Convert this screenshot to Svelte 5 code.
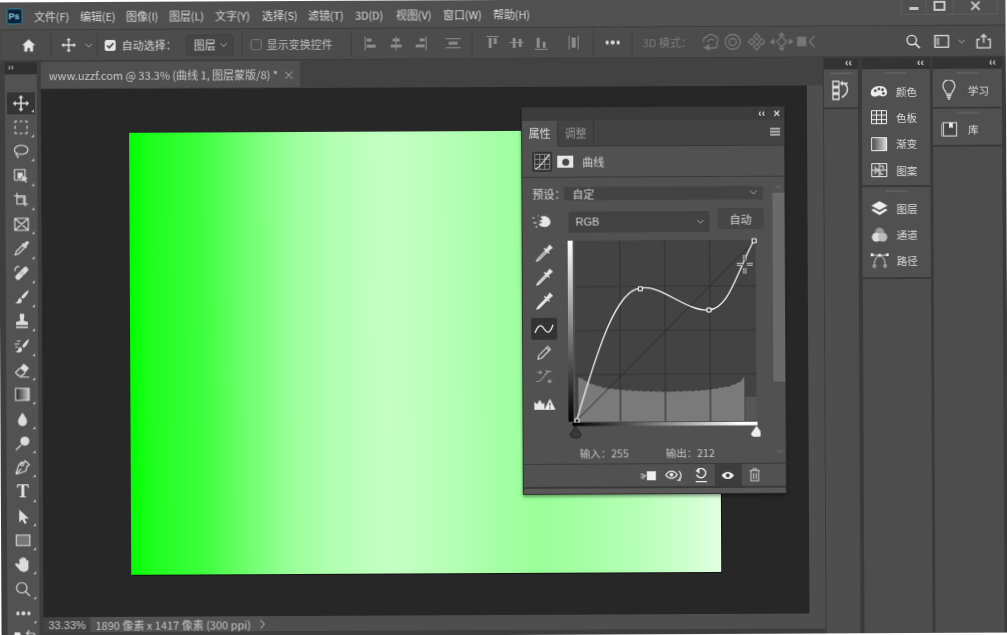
<script>
  const menus = [['文件(F)',46],['编辑(E)',46],['图像(I)',43],['图层(L)',46],['文字(Y)',47],['选择(S)',46],['滤镜(T)',47],['3D(D)',41],['视图(V)',47],['窗口(W)',50],['帮助(H)',40]];
  const tools = [
    { k: 'move', f: 'M12 1l-3.500 4h2.500v6H5V8.500L1 12l4 3.500V13h6v6H8.500l3.500 4 3.500-4H13v-6h6v2.500l4-3.500-4-3.500V11h-6V5h2.500z' },
    { s: 'M4 6V4h3M10 4h4M17 4h3v2M20 10v4M20 18v2h-3M14 20h-4M7 20H4v-2M4 14v-4' },
    { s: 'M12 4c5 0 9 2.500 9 6s-4 6-9 6-9-2.500-9-6 4-6 9-6zM6 15c-2 2 0 3 1 3s1 2 0 3' },
    { s: 'M3 3h14v14H3z', f: 'M7 7h7v5l-2 0v3H7zM13 11l8 4-3.500 1 2 3.500-1.500 1-2-3.500-3 2z' },
    { s: 'M2 6h15v14M6 2v15h15M6 8h9v9' },
    { s: 'M3 4h18v16H3zM3 4l18 16M21 4L3 20' },
    { s: 'M13 8l-8 8-2 5 5-2 8-8z', f: 'M12 6l6 6 1-2-1-1 3-3a2 2 0 0 0-3-3l-3 3-1-1z' },
    { f: 'M4 15L15 4a3 3 0 0 1 4 0l1 1a3 3 0 0 1 0 4L9 20a3 3 0 0 1-4 0l-1-1a3 3 0 0 1 0-4z', s: 'M3 9a5 5 0 0 1 6-6', dots: 1 },
    { f: 'M21 2c-3 2-8 6-10 10l2 2c4-2 8-8 8-12zM10 13c-3 0-3 3-4 5l-3 1c3 2 9 2 9-3z' },
    { f: 'M9 2h6v5l-1 4 6 2v4H4v-4l6-2-1-4zM4 19h16v2H4z' },
    { f: 'M21 2c-3 2-7 6-9 10l2 2c4-2 7-8 7-12zM10 13c-3 0-3 3-4 5l-3 1c3 2 9 2 9-3z', s: 'M2 9h6M3 13h3M5 5h5' },
    { f: 'M14 3l7 6-5 6-7-6z', s: 'M9 9l-6 6 4 4h5l4-4M8 21h13' },
    { t: 'G' },
    { f: 'M12 3c3 5 6 8 6 12a6 6 0 0 1-12 0c0-4 3-7 6-12z' },
    { f: 'M15 3a6 6 0 1 0 .01 0z', s: 'M10 14l-7 7' },
    { s: 'M15 3l6 6-3 1-2 7-9 3-4 1 1-4 3-9 7-2zM3 21l7-7M11 10a2.500 2.500 0 1 1 .01 0' },
    { t: 'T' },
    { f: 'M7 3v17l4-4 3 6 3-1-3-6h6z' },
    { t: 'R' },
    { f: 'M7 12V6a1.500 1.500 0 0 1 3 0v5V4a1.500 1.500 0 0 1 3 0v7V5a1.500 1.500 0 0 1 3 0v7V8a1.500 1.500 0 0 1 3 0v9c0 3-3 5-6 5s-5-1-7-4l-5-6 1.500-1.500z' },
    { s: 'M10 10m-7 0a7 7 0 1 0 14 0 7 7 0 1 0-14 0M15 15l6 6' },
  ];
  const dock2 = [['颜色','palette'],['色板','grid'],['渐变','grad'],['图案','pattern']];
  const dock2b = [['图层','layers'],['通道','channels'],['路径','paths']];
  const droppers = ['#222', '#888', '#f2f2f2'];

  // jagged histogram outline, in graph coordinates
  const tops = [[18,141],[25,145],[40,150],[56,152],[80,153.5],[100,154],[130,153.5],[146,152],[165,149],[175,145],[181,139]];
  function topAt(x) {
    for (let i = 1; i < tops.length; i++) {
      if (x <= tops[i][0]) {
        const [x0, y0] = tops[i - 1];
        const [x1, y1] = tops[i];
        return y0 + (y1 - y0) * (x - x0) / (x1 - x0);
      }
    }
    return 139;
  }
  let hist = 'M14 184V140';
  for (let x = 18; x <= 181; x += 2) hist += `L${x} ${(topAt(x) + ((x * 7) % 3) * 0.5).toFixed(1)}`;
  hist += 'V184z';
</script>

<div class="app">
  <header class="menubar">
    <div class="logo">Ps</div>
    <nav class="menus">
      {#each menus as [m, w]}<span style="width:{w}px">{m}</span>{/each}
    </nav>
    <div class="winbtns">
      <span class="wb"><i class="minus"></i></span>
      <span class="wb two"><i class="square"></i></span>
      <span class="wb close">
        <svg viewBox="0 0 12 12" width="10" height="10"><path d="M1 1l10 10M11 1L1 11" stroke="#ccc" stroke-width="2.200"/></svg>
      </span>
    </div>
  </header>

  <div class="options">
    <div class="opt home">
      <svg viewBox="0 0 16 16" width="16" height="14"><path d="M8 1L0.500 8H3v7h3.500v-4h3v4H13V8h2.500z" fill="#e6e6e6"/></svg>
    </div>
    <div class="opt move">
      <svg viewBox="0 0 24 24" width="16" height="16"><path d="M12 3v18M3 12h18" stroke="#ddd" stroke-width="2"/><path d="M12 1l-3.500 4h7zM12 23l-3.500-4h7zM1 12l4-3.500v7zM23 12l-4-3.500v7z" fill="#ddd"/></svg>
      <svg viewBox="0 0 10 6" width="8" height="5"><path d="M1 1l4 4 4-4" fill="none" stroke="#aaa" stroke-width="1.200"/></svg>
    </div>
    <div class="opt auto">
      <span class="cb on"><svg viewBox="0 0 10 10" width="9" height="9"><path d="M1.500 5l2.500 2.500 4.500-5" fill="none" stroke="#444" stroke-width="1.800"/></svg></span>
      <span class="lbl">自动选择：</span>
      <span class="select">图层<svg viewBox="0 0 10 6" width="8" height="5"><path d="M1 1l4 4 4-4" fill="none" stroke="#aaa" stroke-width="1.200"/></svg></span>
    </div>
    <div class="opt transform">
      <span class="cb"></span>
      <span class="lbl dim">显示变换控件</span>
    </div>
    <div class="opt aligns">
      <svg viewBox="0 0 110 16" width="110" height="16" fill="#8c8c8c">
        <path d="M1 1h1v14H1zM3 3h5v3H3zM3 9h9v3H3z"/>
        <path d="M32 1h1v14h-1zM29 3h7v3h-7zM27 9h11v3H27z"/>
        <path d="M62 1h1v14h-1zM56 3h5v3h-5zM52 9h9v3h-9z"/>
        <path d="M82 3h15v1H82zM82 12h15v1H82zM85 6.500h9v3h-9z"/>
      </svg>
    </div>
    <div class="opt aligns2">
      <svg viewBox="0 0 100 16" width="100" height="16" fill="#8c8c8c">
        <path d="M1 1h12v1H1zM3 3h3v10H3zM8 3h3v6H8z"/>
        <path d="M24 7h14v1H24zM27 3h3v10h-3zM33 4h3v8h-3z"/>
        <path d="M49 14h13v1H49zM51 3h3v10h-3zM57 7h3v6h-3z"/>
        <path d="M83 1h1v14h-1zM92 1h1v14h-1zM86 3h4v10h-4z"/>
      </svg>
    </div>
    <div class="opt more"><i></i><i></i><i></i></div>
    <div class="opt mode">
      <span class="lbl dim3">3D 模式：</span>
      <svg viewBox="0 0 118 18" width="118" height="18" fill="none" stroke="#777" stroke-width="1.300">
        <path d="M3 9a3.500 3.500 0 0 1 3-5 5 5 0 0 1 8-1 4 4 0 0 1 2 7 3 3 0 0 1-2 5H8"/><path d="M8 12l-4 2.500L8 17z" fill="#777"/><path d="M7 9a4 4 0 0 1 6-2"/>
        <circle cx="32" cy="9" r="7.500"/><circle cx="32" cy="9" r="3.500"/>
        <path d="M56 1l3 3-3 3-3-3zM56 11l3 3-3 3-3-3zM51 6l3 3-3 3-3-3zM61 6l3 3-3 3-3-3z"/>
        <path d="M81 4l5 5-5 5-5-5zM71 9h3M88 9h3" /><path d="M81 0l-2 2.500h4zM81 18l-2-2.500h4zM70 9l3-2v4zM92 9l-3-2v4z" fill="#777"/>
        <path d="M97 5h8v8h-8z" fill="#777"/><path d="M114 3l-5 6 5 6"/>
      </svg>
    </div>
    <div class="right-icons">
      <svg viewBox="0 0 16 16" width="15" height="15"><circle cx="6.500" cy="6.500" r="5" fill="none" stroke="#ddd" stroke-width="1.500"/><path d="M10 10l5 5" stroke="#ddd" stroke-width="1.800"/></svg>
      <svg class="wsp" viewBox="0 0 16 14" width="16" height="13"><rect x=".7" y=".7" width="14.600" height="12.600" fill="none" stroke="#ddd" stroke-width="1.400"/><rect x="2" y="3" width="3.500" height="8" fill="#999"/></svg>
      <svg class="wchev" viewBox="0 0 10 6" width="8" height="5"><path d="M1 1l4 4 4-4" fill="none" stroke="#aaa" stroke-width="1.200"/></svg>
      <svg viewBox="0 0 16 16" width="16" height="15"><path d="M4 6H1v9h14V6h-3" fill="none" stroke="#ddd" stroke-width="1.400"/><path d="M8 10V1M5 4l3-3 3 3" fill="none" stroke="#ddd" stroke-width="1.400"/></svg>
    </div>
  </div>

  <div class="main">
    <aside class="toolbar">
      <div class="collapse">››</div>
      <div class="tools">
        {#each tools as tool, i}
          <div class="tool" class:active={i === 0}>
            {#if tool.t === 'G'}
              <svg viewBox="0 0 24 24" width="18" height="18"><defs><linearGradient id="tg"><stop offset="0" stop-color="#222"/><stop offset="1" stop-color="#ccc"/></linearGradient></defs><rect x="3" y="4" width="18" height="16" fill="url(#tg)" stroke="#ddd" stroke-width="1.500"/></svg>
            {:else if tool.t === 'T'}
              <span class="t-tool">T</span>
            {:else if tool.t === 'R'}
              <svg viewBox="0 0 24 24" width="18" height="18"><rect x="3" y="5" width="18" height="14" fill="#777" stroke="#ddd" stroke-width="1.500"/></svg>
            {:else}
              <svg viewBox="0 0 24 24" width="18" height="18">
                {#if tool.f}<path d={tool.f} fill="#dcdcdc"/>{/if}
                {#if tool.s}<path d={tool.s} fill="none" stroke="#dcdcdc" stroke-width="1.500" stroke-linejoin="round"/>{/if}
                {#if tool.dots}<path d="M10 10h1v1h-1zM13 10h1v1h-1zM10 13h1v1h-1zM13 13h1v1h-1zM11.500 11.500h1v1h-1z" fill="#444"/>{/if}
              </svg>
            {/if}
            {#if tool.k !== 'none'}<b class="corner"></b>{/if}
          </div>
        {/each}
        <div class="tool dots"><i></i><i></i><i></i><b class="corner"></b></div>
        <div class="swatches">
          <svg viewBox="0 0 24 10" width="24" height="10"><path d="M2 3h5l1 1v6H2z" fill="#e6e6e6"/><path d="M14 4h8M17 1l-3 3 3 3M22 4v6" fill="none" stroke="#ccc" stroke-width="1.200"/></svg>
        </div>
      </div>
    </aside>

    <section class="doc">
      <div class="tabs">
        <div class="tab">www.uzzf.com @ 33.3% (曲线 1, 图层蒙版/8) *<span class="x">×</span></div>
      </div>
      <div class="stage">
        <div class="canvas"></div>
      </div>
      <footer class="status">
        <span class="zoom">33.33%</span>
        <span class="info">1890 像素 x 1417 像素 (300 ppi)<svg viewBox="0 0 6 10" width="6" height="10"><path d="M1 1l4 4-4 4" fill="none" stroke="#bbb"/></svg></span>
      </footer>
      <div class="bottomband"></div>

      <div class="panel">
        <div class="p-top">
          <span>‹‹</span><span class="px">✕</span>
        </div>
        <div class="p-tabs">
          <span class="ptab on">属性</span><span class="ptab">调整</span>
          <span class="burger"><i></i><i></i><i></i></span>
        </div>
        <div class="p-head">
          <span class="hbtn">
            <svg viewBox="0 0 16 16" width="16" height="16"><path d="M.5.5h15v15H.5zM5.500.5v15M10.500.5v15M.5 5.500h15M.5 10.500h15" fill="none" stroke="#999" stroke-width=".8"/><path d="M1 15C6 14 10 6 15 1" stroke="#eee" fill="none" stroke-width="1.100"/></svg>
          </span>
          <span class="mask"><i></i></span>
          <span class="ptitle">曲线</span>
        </div>
        <div class="p-body">
          <div class="p-content">
            <div class="preset">
              <span class="plabel">预设：</span>
              <span class="psel">自定<svg viewBox="0 0 10 6" width="8" height="5"><path d="M1 1l4 4 4-4" fill="none" stroke="#aaa" stroke-width="1.200"/></svg></span>
            </div>
            <div class="rgbrow">
              <svg class="hand" viewBox="0 0 20 16" width="20" height="16"><path d="M8 3c4-2 9 0 10 5 0 3-3 6-7 5-3 0-4-2-5-3l4-1-4-2 4-1z" fill="#e8e8e8"/><path d="M0 4h2M1 9h3M3 13h2M5 2h1" stroke="#e8e8e8" stroke-width="1.200"/></svg>
              <span class="rgbsel">RGB<svg viewBox="0 0 10 6" width="8" height="5"><path d="M1 1l4 4 4-4" fill="none" stroke="#aaa" stroke-width="1.200"/></svg></span>
              <span class="autob">自动</span>
            </div>
            <div class="curvearea">
              <div class="ctools">
                {#each droppers as c}
                  <div class="ct">
                    <svg viewBox="0 0 20 20" width="20" height="20"><path d="M12 8L4 16l-1 2 2-.5 8-8z" fill={c} stroke="#e4e4e4" stroke-width="1.200"/><path d="M10.500 5.500l5 5M13 7l3-4 2 2-4 3" fill="#e4e4e4" stroke="#e4e4e4" stroke-width="1.600"/></svg>
                  </div>
                {/each}
                <div class="ct sel">
                  <svg viewBox="0 0 20 12" width="20" height="12"><path d="M1 10C4 2 7 1 10 6s6 5 9-4" fill="none" stroke="#eee" stroke-width="1.300"/></svg>
                </div>
                <div class="ct">
                  <svg viewBox="0 0 20 20" width="18" height="18"><path d="M3 17l1-4L14 3l3 3L7 16zM12.500 4.500l3 3" fill="none" stroke="#ddd" stroke-width="1.200"/></svg>
                </div>
                <div class="ct">
                  <svg viewBox="0 0 20 20" width="18" height="18"><path d="M1 15h3C8 15 11 5 15 4h3M11 3l4 1-3 3M2 5h5M5 3l2 2-2 2M14 15h5M17 13l-3 2 3 2" fill="none" stroke="#999" stroke-width="1.200"/></svg>
                </div>
                <div class="ct warn">
                  <svg viewBox="0 0 24 14" width="22" height="13"><path d="M1 4l3 3 3-5 3 5 2-2v8H1z" fill="#e8e8e8"/><path d="M18 1l6 12H12z" fill="#f0f0f0"/><path d="M18 5v4M18 10v2" stroke="#444" stroke-width="1.300"/></svg>
                </div>
              </div>
              <div class="graphwrap">
                <svg viewBox="0 0 196 208" width="196" height="208">
                  <defs>
                    <linearGradient id="vg" x1="0" y1="0" x2="0" y2="1"><stop offset="0" stop-color="#fff"/><stop offset="1" stop-color="#000"/></linearGradient>
                    <linearGradient id="hg"><stop offset="0" stop-color="#000"/><stop offset=".8" stop-color="#ddd"/><stop offset=".9" stop-color="#fff"/></linearGradient>
                  </defs>
                  <rect x="4" y="3" width="5" height="181" fill="url(#vg)"/>
                  <rect x="11" y="3" width="181" height="181" fill="#434343"/>
                  <rect x="181" y="160" width="11" height="24" fill="#565656"/>
                  <path d={hist} fill="#7a7a7a"/>
                  <path d="M56 3v181M101 3v181M146 3v181M11 49h181M11 93h181M11 137h181" stroke="#353535" stroke-width="1.200"/>
                  <path d="M11 184L192 3" stroke="#2c2c2c" stroke-width="1"/>
                  <path d="M12 183C30 125 50 53 76 51c21-5 46 24 69 22 20-2 27-35 45-69" fill="none" stroke="#f2f2f2" stroke-width="1.300"/>
                  <rect x="10.500" y="181" width="4" height="4" fill="#222" stroke="#fff"/>
                  <rect x="74.500" y="49.500" width="4" height="4" fill="#444" stroke="#fff"/>
                  <rect x="143" y="71" width="4" height="4" fill="#444" stroke="#fff"/>
                  <rect x="188.500" y="2" width="4" height="4" fill="#444" stroke="#fff"/>
                  <path d="M181 18v6M181 31v6M173 27.500h6M183 27.500h6" stroke="#ddd" stroke-width="3"/>
                  <path d="M181 18v6M181 31v6M173 27.500h6M183 27.500h6" stroke="#555" stroke-width="1.400"/>
                  <rect x="8" y="185" width="185" height="3.500" fill="url(#hg)"/>
                  <path d="M11 189l-5 7a3 3 0 0 0 2 4h6a3 3 0 0 0 2-4z" fill="#3a3a3a" stroke="#1f1f1f"/>
                  <path d="M192 189l-5 7a3 3 0 0 0 2 4h6a3 3 0 0 0 2-4z" fill="#eee"/>
                </svg>
                <div class="readout"><span>输入：255</span><span>输出：212</span></div>
              </div>
            </div>
          </div>
          <div class="scroll">
            <svg viewBox="0 0 10 6" width="8" height="5"><path d="M1 5l4-4 4 4" fill="none" stroke="#777" stroke-width="1.200"/></svg>
            <div class="thumb"></div>
            <svg class="down" viewBox="0 0 10 6" width="8" height="5"><path d="M1 1l4 4 4-4" fill="none" stroke="#777" stroke-width="1.200"/></svg>
          </div>
        </div>
        <div class="p-foot">
          <span class="fb"><svg viewBox="0 0 20 14" width="18" height="13"><rect x="9" y="2" width="10" height="10" fill="#eee"/><path d="M2 5l6 2-6 2M4 11l2-2" stroke="#eee" fill="none"/></svg></span>
          <span class="fb"><svg viewBox="0 0 20 14" width="19" height="13"><path d="M1 6c3-5 9-5 12 0-3 5-9 5-12 0z" fill="none" stroke="#eee" stroke-width="1.400"/><circle cx="7" cy="6" r="2" fill="#eee"/><path d="M15 2c3 3 3 7 0 10M13 12h3v-3" fill="none" stroke="#eee" stroke-width="1.400"/></svg></span>
          <span class="fb"><svg viewBox="0 0 16 16" width="15" height="15"><path d="M4 3a5 5 0 1 1-1 5" fill="none" stroke="#eee" stroke-width="1.500" transform="translate(0 -1)"/><path d="M6 0L2 3l4 3z" fill="#eee"/><path d="M2 14.500h12" stroke="#eee" stroke-width="1.300"/></svg></span>
          <span class="fb active"><svg viewBox="0 0 16 10" width="14" height="9"><path d="M1 5c3-5.500 11-5.500 14 0-3 5.500-11 5.500-14 0z" fill="#eee"/><circle cx="8" cy="5" r="2.200" fill="#3d3d3d"/></svg></span>
          <span class="fb"><svg viewBox="0 0 14 16" width="12" height="14"><path d="M1 3h12M5 3V1h4v2M2.500 3v12h9V3M5.500 6v7M8.500 6v7" fill="none" stroke="#ccc" stroke-width="1.200"/></svg></span>
        </div>
        <div class="p-grip"></div>
      </div>
    </section>

    <aside class="dock">
      <div class="dcol c1">
        <div class="dhead">‹‹</div>
        <div class="dgroup g1">
          <div class="grip"></div>
          <div class="ditem center">
            <svg viewBox="0 0 18 20" width="18" height="20"><path d="M1 1h6v5H1zM1 7.500h6v5H1zM1 14h6v5H1z" fill="none" stroke="#ddd" stroke-width="1.300"/><path d="M9 3h7M11 1l-2 2 2 2M12 3c5 3 5 10-2 14" fill="none" stroke="#ddd" stroke-width="1.500"/></svg>
          </div>
        </div>
        <div class="dfill"></div>
      </div>
      <div class="dcol c2">
        <div class="dhead">‹‹</div>
        <div class="dgroup g2">
          <div class="grip"></div>
          {#each dock2 as [label, k]}
            <div class="ditem">
              {#if k === 'palette'}
                <svg viewBox="0 0 20 14" width="18" height="13"><path d="M1 8c0-5 6-8 11-7 5 0 7 4 7 7s-3 5-6 4-3-1-5 0-7 1-7-4z" fill="#eee"/><circle cx="6" cy="6" r="1.500" fill="#444"/><circle cx="10" cy="4" r="1.500" fill="#444"/><circle cx="14" cy="5" r="1.500" fill="#444"/><circle cx="15" cy="9" r="1.500" fill="#444"/></svg>
              {:else if k === 'grid'}
                <svg viewBox="0 0 16 14" width="16" height="14"><path d="M.5.5h15v13H.5zM5.500.5v13M10.500.5v13M.5 5h15M.5 9.500h15" fill="none" stroke="#eee"/></svg>
              {:else if k === 'grad'}
                <svg viewBox="0 0 16 14" width="16" height="14"><defs><linearGradient id="dg"><stop offset="0" stop-color="#444"/><stop offset="1" stop-color="#ddd"/></linearGradient></defs><rect x=".5" y=".5" width="15" height="13" fill="url(#dg)" stroke="#eee"/></svg>
              {:else}
                <svg viewBox="0 0 16 14" width="16" height="14"><path d="M.5.5h15v13H.5zM8 .5v13M.5 7h15M4 3v3h3M9 3h3v3M4 11V8h3M12 11H9V8" fill="none" stroke="#eee"/></svg>
              {/if}
              <span>{label}</span>
            </div>
          {/each}
        </div>
        <div class="dgroup g3">
          <div class="grip"></div>
          {#each dock2b as [label, k]}
            <div class="ditem">
              {#if k === 'layers'}
                <svg viewBox="0 0 16 14" width="16" height="14"><path d="M8 0l8 4.500-8 4.500-8-4.500z" fill="#eee"/><path d="M2 7.500L0 9l8 5 8-5-2-1.500-6 3.500z" fill="#eee"/></svg>
              {:else if k === 'channels'}
                <svg viewBox="0 0 16 15" width="16" height="15"><circle cx="8" cy="5" r="4.500" fill="#999"/><circle cx="4.800" cy="10" r="4.500" fill="#ddd"/><circle cx="11.200" cy="10" r="4.500" fill="#bbb"/></svg>
              {:else}
                <svg viewBox="0 0 20 16" width="19" height="15"><path d="M2 2h16M10 2C5 4 4 9 4 13M10 2c5 2 6 7 6 11" fill="none" stroke="#ddd"/><path d="M0 0h3v3H0zM17 0h3v3h-3zM8.500 .5h3v3h-3z" fill="#eee"/><circle cx="4" cy="14" r="1.500" fill="none" stroke="#ddd"/><circle cx="16" cy="14" r="1.500" fill="none" stroke="#ddd"/></svg>
              {/if}
              <span>{label}</span>
            </div>
          {/each}
        </div>
        <div class="dfill"></div>
      </div>
      <div class="dcol c3">
        <div class="dhead">‹‹</div>
        <div class="dgroup g4">
          <div class="grip"></div>
          <div class="ditem">
            <svg viewBox="0 0 14 20" width="14" height="20"><path d="M4.500 14C4 11 1 9.500 1 6a6 6 0 0 1 12 0c0 3.500-3 5-3.500 8z" fill="none" stroke="#ddd" stroke-width="1.200"/><path d="M4.500 15.500h5M5 17.500h4M6 19.500h2" stroke="#ddd" stroke-width="1.300"/></svg>
            <span>学习</span>
          </div>
        </div>
        <div class="dgroup g5">
          <div class="grip"></div>
          <div class="ditem">
            <svg viewBox="0 0 18 16" width="17" height="15"><path d="M3 1h14v14H3z" fill="#444" stroke="#ccc" stroke-width="1.300"/><path d="M3 1L1 2.500V15l2 0" fill="none" stroke="#aaa"/><path d="M9 1h4v6l-2-1.500L9 7z" fill="#eee"/></svg>
            <span>库</span>
          </div>
        </div>
        <div class="dfill"></div>
      </div>
    </aside>
  </div>
</div>

<style>
  :global(html), :global(body) { margin: 0; background: #fff; overflow: hidden; }
  .app {
    width: 1007px; height: 635px; overflow: hidden; display: flex; flex-direction: column;
    background: #4b4b4b; color: #d4d4d4;
    font: 11px "Noto Sans CJK SC", "Liberation Sans", sans-serif;
    transform: rotate(-0.28deg);
    filter: blur(.3px);
  }
  svg { display: block; flex: none; }

  .menubar { height: 27px; flex: none; display: flex; align-items: center; background: #505050; position: relative; }
  .logo {
    width: 16px; height: 16px; margin-left: 7.500px; border-radius: 3px; background: #0a2436; border: 1px solid #2f7f9f; box-sizing: border-box;
    color: #8fd0f0; font: bold 9px/14px "Liberation Sans", sans-serif; text-align: center;
  }
  .menus { display: flex; margin-left: 12px; color: #d6d6d6; white-space: nowrap; letter-spacing: -.1px; }
  .menus span { display: block; }
  .winbtns { position: absolute; right: 8px; top: 0; display: flex; height: 17px; border: 1px solid #5c5c5c; border-top: 0; box-sizing: border-box; }
  .wb { width: 25px; display: flex; align-items: center; justify-content: center; border-right: 1px solid #5c5c5c; box-sizing: border-box; }
  .wb.two { width: 27px; }
  .wb.close { width: 43px; border: 0; }
  .minus { width: 9px; height: 3px; background: #c8c8c8; margin-top: 5px; }
  .square { width: 8px; height: 6px; border: 2px solid #c8c8c8; }

  .options {
    height: 32px; flex: none; margin: 0 1px 0 2px; display: flex; align-items: center; background: #4c4c4c;
    border-top: 1px solid #3c3c3c; border-bottom: 1px solid #3c3c3c; border-left: 1px solid #444; box-sizing: border-box;
  }
  .opt { height: 26px; display: flex; align-items: center; border-right: 1px solid #3f3f3f; flex: none; box-sizing: border-box; }
  .home { width: 50px; justify-content: center; padding-left: 4px; }
  .move { width: 46px; padding-left: 9px; gap: 8px; }
  .auto { width: 145px; padding-left: 7px; }
  .cb { width: 11px; height: 11px; border-radius: 2px; border: 1px solid #777; box-sizing: border-box; flex: none; display: flex; align-items: center; justify-content: center; }
  .cb.on { background: #e4e4e4; border-color: #e4e4e4; }
  .lbl { margin-left: 6px; white-space: nowrap; }
  .transform .lbl { margin-left: 5px; }
  .dim { color: #bdbdbd; }
  .dim3 { color: #7d7d7d; margin: 0 0 0 10px; width: 58px; }
  .select {
    margin-left: 9px; width: 48px; height: 21px; box-sizing: border-box; background: #454545; border: 1px solid #3f3f3f; border-radius: 3px;
    display: flex; align-items: center; justify-content: space-between; padding: 0 5px 0 7px;
  }
  .transform { width: 109px; padding-left: 8px; }
  .aligns { width: 121px; padding-left: 12px; }
  .aligns2 { width: 121px; padding-left: 13px; }
  .more { width: 39px; gap: 2px; justify-content: center; }
  .more i, .dots i { width: 3.500px; height: 3.500px; background: #ddd; border-radius: 50%; display: block; }
  .mode { border: 0; }
  .right-icons { margin-left: auto; display: flex; align-items: center; padding-right: 13px; }
  .wsp { margin-left: 13px; }
  .wchev { margin: 0 10px 0 8px; }

  .main { flex: 1; min-height: 0; display: flex; }
  .toolbar { width: 42px; flex: none; background: #3e3e3e; padding: 1px 4px 0 6px; box-sizing: border-box; display: flex; flex-direction: column; }
  .collapse { height: 12px; flex: none; background: #303030; font: bold 9px/11px "Liberation Sans", sans-serif; color: #bbb; padding-left: 3px; }
  .tools { flex: 1; background: #525252; padding: 16.500px 0 0 2px; box-sizing: border-box; }
  .grip { width: 22px; height: 2px; margin: 3px auto 0; background: #5f5f5f; }
  .tool { width: 28px; height: 24.300px; display: flex; align-items: center; justify-content: center; position: relative; box-sizing: border-box; }
  .tool.active { background: #353535 padding-box; border-block: 1.500px solid transparent; }
  .corner { position: absolute; right: 1px; bottom: 2px; width: 0; height: 0; border-left: 3px solid transparent; border-bottom: 3px solid #bbb; }
  .t-tool { font: bold 18px/1 "Liberation Serif", serif; color: #e4e4e4; }
  .dots { gap: 2px; }
  .swatches { padding: 4px 0 0 3px; }

  .doc { flex: 1; min-width: 0; position: relative; display: flex; flex-direction: column; background: #4e4e4e; }
  .tabs { height: 28px; flex: none; background: #424242; display: flex; padding-top: 1px; box-sizing: border-box; }
  .tab {
    width: 259px; background: #505050; display: flex; align-items: center; padding-left: 8px; box-sizing: border-box; white-space: nowrap;
    color: #c9c9c9; height: 26px;
  }
  .x { margin-left: 5px; color: #999; font-size: 12px; }
  .stage { flex: 1; min-height: 0; position: relative; background: #272727; margin-right: 16.500px; }
  .canvas {
    position: absolute; left: 88px; top: 44px; width: 590px; height: 442px;
    box-shadow: 1px 1px 0 #111;
    background: linear-gradient(90deg, #00ff00 0%, #1eff1e 3.400%, #3cff3c 11.900%, #70ff70 20%, #98ff98 27%, #b0ffb0 34%, #c4ffc4 43.500%, #b6ffb6 54%, #a4ffa4 62.700%, #99ff99 69.500%, #aaffaa 79.700%, #bcffbc 88%, #cfffcf 94.900%, #e0ffe0 100%);
  }
  .status { height: 15px; flex: none; display: flex; background: #4e4e4e; color: #c4c4c4; line-height: 16px; }
  .zoom { width: 47px; padding-left: 5px; box-sizing: border-box; background: #434343; font-family: "Liberation Sans", sans-serif; }
  .info { display: flex; align-items: center; gap: 8px; width: 173px; padding-left: 5px; background: #535353; white-space: nowrap; box-sizing: border-box; }
  .bottomband { height: 5px; flex: none; background: #3d3d3d; }

  .panel {
    position: absolute; left: 480px; top: 48px; width: 264px; height: 388px; background: #515151; border: 1px solid #2e2e2e; box-sizing: border-box;
    box-shadow: 0 2px 3px #0006; display: flex; flex-direction: column;
  }
  .p-top { height: 13px; flex: none; background: #3c3c3c; display: flex; justify-content: flex-end; align-items: center; gap: 8px; padding-right: 3px; font: bold 10px "Liberation Sans", sans-serif; color: #ddd; }
  .px { font-size: 9px; }
  .p-tabs { height: 26px; flex: none; background: #434343; display: flex; position: relative; border-bottom: 1px solid #363636; box-sizing: border-box; }
  .ptab { width: 36px; text-align: center; line-height: 25px; color: #999; border-right: 1px solid #363636; box-sizing: border-box; }
  .ptab.on { background: #515151; color: #ddd; height: 26px; }
  .burger { position: absolute; right: 4px; top: 8px; width: 10px; display: flex; flex-direction: column; gap: 1px; }
  .burger i { height: 2px; background: #aaa; display: block; }
  .p-head { height: 31px; flex: none; display: flex; align-items: center; padding-left: 10px; border-bottom: 1px solid #3a3a3a; box-sizing: border-box; }
  .hbtn { width: 20px; height: 20px; background: #333; border-radius: 2px; display: flex; align-items: center; justify-content: center; }
  .mask { width: 16px; height: 12px; background: #e6e6e6; margin-left: 5px; display: flex; align-items: center; justify-content: center; }
  .mask i { width: 7px; height: 7px; border-radius: 50%; background: #444; }
  .ptitle { margin-left: 9px; }
  .p-body { flex: 1; min-height: 0; display: flex; }
  .p-content { flex: 1; min-width: 0; padding-left: 8px; }
  .preset { height: 14px; margin-top: 8.500px; display: flex; align-items: center; }
  .plabel { width: 31px; padding-left: 2px; flex: none; white-space: nowrap; }
  .psel { width: 200px; height: 14px; background: #434343; border-radius: 2px; display: flex; align-items: center; justify-content: space-between; padding: 0 5px 0 8px; box-sizing: border-box; border: 1px solid #484848; }
  .rgbrow { margin-top: 8px; height: 24px; display: flex; }
  .hand { margin: 5px 0 0 2px; }
  .rgbsel { margin: 3px 0 0 16px; width: 141px; height: 21px; background: #424242; border-radius: 2px; box-sizing: border-box; padding: 0 5px 0 7px; display: flex; align-items: center; justify-content: space-between; font-family: "Liberation Sans", sans-serif; }
  .autob { margin-left: 8px; width: 46px; height: 21px; background: #474747; border-radius: 2px; text-align: center; line-height: 20px; border: 1px solid #434343; box-sizing: border-box; }
  .curvearea { display: flex; margin-top: 5px; }
  .ctools { width: 33px; flex: none; padding-top: 3px; box-sizing: border-box; }
  .ct { width: 26px; height: 24px; display: flex; align-items: center; justify-content: center; }
  .ct.sel { background: #333; border-radius: 2px; height: 22px; margin: 5px 0 1px; }
  .ct.warn { margin-top: 4px; }
  .readout { display: flex; margin-top: 1px; font-size: 10.500px; line-height: 14px; color: #c4c4c4; padding-left: 15px; }
  .readout span { width: 86px; white-space: nowrap; }
  .scroll { width: 13px; flex: none; padding-top: 8px; box-sizing: border-box; display: flex; flex-direction: column; align-items: center; }
  .thumb { width: 12px; height: 189px; margin-top: 3px; background: #6a6a6a; }
  .down { margin-top: auto; margin-bottom: 9px; }
  .p-foot { height: 23px; flex: none; border-top: 1px solid #3a3a3a; display: flex; justify-content: flex-end; align-items: stretch; padding-right: 17.500px; box-sizing: border-box; }
  .fb { width: 26.750px; display: flex; align-items: center; justify-content: center; }
  .fb.active { background: #3d3d3d; }
  .p-grip { height: 7px; flex: none; border-top: 2px solid #393939; background: #585858; box-sizing: border-box; }

  .dock { width: 183px; flex: none; background: #3a3a3a; display: flex; padding: 1px 4px 0 1px; box-sizing: border-box; }
  .dcol { display: flex; flex-direction: column; flex: none; }
  .c1 { width: 34px; margin-right: 4px; }
  .c2 { width: 68px; margin-right: 3px; }
  .c3 { width: 69px; }
  .dhead { height: 11px; flex: none; background: #333; text-align: right; padding-right: 6px; font: bold 10px/9px "Liberation Sans", sans-serif; color: #ddd; }
  .dgroup { flex: none; background: #505050; border-bottom: 2px solid #3a3a3a; box-sizing: border-box; }
  .g1, .g4 { height: 40px; }
  .g2 { height: 118px; }
  .g3 { height: 92px; }
  .g5 { height: 38px; }
  .g1 .ditem, .g4 .ditem, .g2 .ditem:nth-child(2), .g3 .ditem:nth-child(2) { margin-top: 3px; }
  .g2 .ditem:nth-child(2) { margin-top: 4px; }
  .g5 .ditem { margin-top: 2px; }
  .dfill { flex: 1; background: #4d4d4d; }
  .ditem { height: 26.300px; display: flex; align-items: center; padding-left: 8px; gap: 8px; font-size: 10.500px; color: #dcdcdc; }
  .ditem svg { width: 18px; }
  .g4 .ditem, .g5 .ditem { padding-left: 7px; gap: 10px; }
  .ditem.center { justify-content: center; padding: 0; }
</style>
